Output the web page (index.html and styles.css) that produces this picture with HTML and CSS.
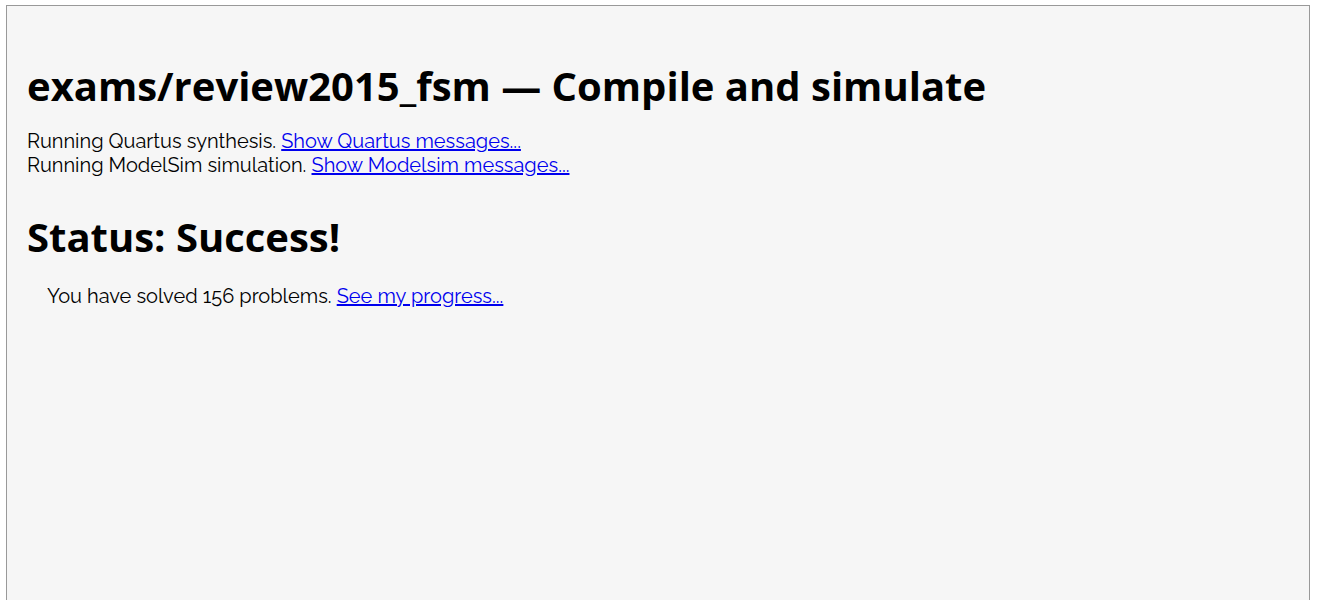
FILE: index.html
```
<!DOCTYPE html>
<html lang="en">
<head>
<meta charset="utf-8">
<title>Compile and simulate</title>
<link rel="stylesheet" href="styles.css">
</head>
<body>
<main class="panel">
<h1 class="heading">exams/review2015_fsm — Compile and simulate</h1>
<p class="log">Running Quartus synthesis. <a href="#quartus">Show Quartus messages...</a><br>
Running ModelSim simulation. <a href="#modelsim">Show Modelsim messages...</a></p>
<h1 class="heading status">Status: Success!</h1>
<p class="summary">You have solved 156 problems. <a href="#progress">See my progress...</a></p>
</main>
</body>
</html>
```

FILE: styles.css
```
* {
  box-sizing: border-box;
}

body {
  margin: 0;
  padding: 5px 8px 0 6px;
  background: #fff;
  color: #000;
  font-family: Raleway, Lato, "Open Sans", sans-serif;
  font-size: 20px;
  font-weight: 400;
  line-height: 24px;
}

.panel {
  min-height: calc(100vh - 5px);
  padding: 53px 20px 20px;
  border: 1px solid #999;
  border-bottom: 0;
  background: #f6f6f6;
}

.heading {
  margin: 0;
  font-family: "Open Sans", sans-serif;
  font-size: 40px;
  font-weight: 700;
  line-height: 54px;
}

.log {
  margin: 16px 0 0;
}

.status {
  margin-top: 33px;
}

.summary {
  margin: 20px 20px 0;
}

a {
  color: #0000ee;
}
```
